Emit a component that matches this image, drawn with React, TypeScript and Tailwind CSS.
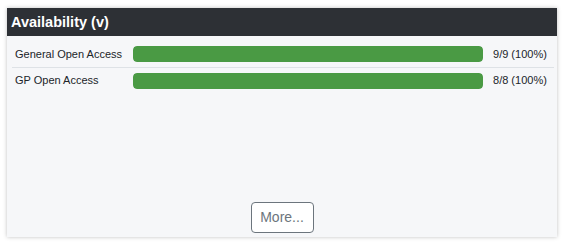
const rows = [
  { name: 'General Open Access', done: 9, total: 9 },
  { name: 'GP Open Access', done: 8, total: 8 },
]

export default function App() {
  return (
    <div className="w-[566px] h-[247px] bg-white pt-[8px] pl-[7px] font-['Liberation_Sans',Arial,sans-serif]">
      <div className="w-[550px] h-[229px] bg-[#f6f7f9] flex flex-col shadow-[0_0_4px_rgba(0,0,0,0.25)]">
        {/* Header */}
        <div className="h-[28px] bg-[#2d3035] flex items-center pl-[4px]">
          <span className="text-white font-bold text-[14.5px] leading-none">Availability (v)</span>
        </div>

        {/* Rows */}
        <div className="flex-1 pt-[5px] mx-[5px] mr-[3px]">
          {rows.map((r, i) => {
            const pct = Math.round((r.done / r.total) * 100)
            return (
              <div
                key={r.name}
                className={
                  'h-[26px] flex items-center text-[11px] text-[#212529] ' +
                  (i > 0 ? 'border-t border-[#dee2e6]' : '')
                }
              >
                <span className="w-[121px] shrink-0 pl-[3px] truncate">{r.name}</span>
                <div className="flex-1 h-[16px] bg-[#e9ecef] rounded-[4px] overflow-hidden">
                  <div className="h-full bg-[#4a9a44] rounded-[4px]" style={{ width: `${pct}%` }} />
                </div>
                <span className="w-[71px] shrink-0 pl-[10px] whitespace-nowrap">
                  {r.done}/{r.total} ({pct}%)
                </span>
              </div>
            )
          })}
        </div>

        {/* Footer */}
        <div className="flex justify-center pb-[4px]">
          <button className="w-[63px] h-[31px] border border-[#6c757d] rounded-[4px] bg-white text-[#6c757d] text-[14px]">
            More...
          </button>
        </div>
      </div>
    </div>
  )
}
